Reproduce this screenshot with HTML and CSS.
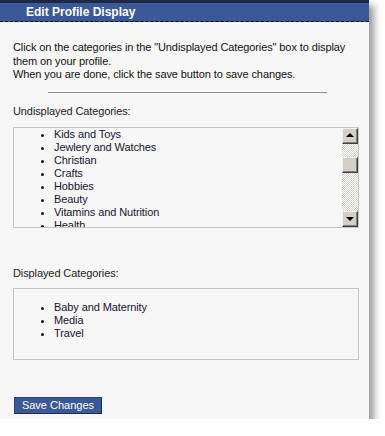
FILE: index.html
```html
<!DOCTYPE html>
<html>
<head>
<meta charset="utf-8">
<link rel="stylesheet" href="styles.css">
</head>
<body>
<div class="panel">
  <div class="topstrip"></div>
  <div class="header">Edit Profile Display</div>
  <div class="content">
    <p class="intro">Click on the categories in the "Undisplayed Categories" box to display them on your profile.<br>When you are done, click the save button to save changes.</p>
    <div class="rule"></div>
    <div class="label">Undisplayed Categories:</div>
    <div class="box scrollbox">
      <ul class="list">
        <li>Kids and Toys</li>
        <li>Jewlery and Watches</li>
        <li>Christian</li>
        <li>Crafts</li>
        <li>Hobbies</li>
        <li>Beauty</li>
        <li>Vitamins and Nutrition</li>
        <li>Health</li>
      </ul>
      <div class="scrollbar">
        <div class="sbtn"><span class="arrow up"></span></div>
        <div class="track">
          <div class="thumb"></div>
        </div>
        <div class="sbtn"><span class="arrow down"></span></div>
      </div>
    </div>
    <div class="label label2">Displayed Categories:</div>
    <div class="box displayed">
      <ul class="list">
        <li>Baby and Maternity</li>
        <li>Media</li>
        <li>Travel</li>
      </ul>
    </div>
    <button class="save">Save Changes</button>
  </div>
</div>
</body>
</html>
```
FILE: styles.css
```css
html, body {
  margin: 0;
  padding: 0;
  background: #ffffff;
}
body {
  font-family: "Liberation Sans", Arial, sans-serif;
  font-size: 11px;
  color: #111;
  letter-spacing: -0.1px;
}
.panel {
  width: 369px;
  height: 419px;
  background: #f7f7f7;
  box-shadow: 5px 5px 7px rgba(0,0,0,0.4);
  display: flex;
  flex-direction: column;
}
.topstrip {
  height: 3px;
  background: #1e2844;
}
.header {
  background: #3b5998;
  color: #fff;
  font-weight: bold;
  font-size: 12px;
  line-height: 18px;
  padding-left: 26px;
  border-bottom: 1px dashed #000;
  box-sizing: border-box;
  height: 19px;
  letter-spacing: 0;
}
.content {
  padding: 19px 10px 0 13px;
  display: flex;
  flex-direction: column;
}
.intro {
  margin: 0;
  line-height: 13.5px;
}
.rule {
  width: 279px;
  height: 1px;
  background: #8c8c8c;
  margin: 10px 0 0 35px;
}
.label {
  margin-top: 12px;
  line-height: 13px;
  color: #222;
}
.box {
  margin-top: 9px;
  width: 346px;
  box-sizing: border-box;
  border: 1px solid #c6c6c6;
  background: #f7f7f7;
}
.scrollbox {
  height: 101px;
  display: flex;
  overflow: hidden;
}
.list {
  margin: 0;
  padding: 0 0 0 40px;
  color: #15152e;
  line-height: 13px;
  flex: 1;
  list-style: disc;
}
.scrollbar {
  width: 16px;
  display: flex;
  flex-direction: column;
}
.sbtn, .thumb {
  height: 16px;
  box-sizing: border-box;
  background: #d4d0c8;
  border-top: 1px solid #f0f0f0;
  border-left: 1px solid #f0f0f0;
  border-right: 1px solid #404040;
  border-bottom: 1px solid #404040;
  box-shadow: inset -1px -1px 0 #808080;
  display: flex;
  align-items: center;
  justify-content: center;
}
.track {
  flex: 1;
  background-color: #f4f3ef;
  background-image: repeating-conic-gradient(#d4d0c8 0 25%, #ffffff 0 50%);
  background-size: 2px 2px;
  padding-top: 13px;
}
.arrow {
  width: 0;
  height: 0;
  border-left: 4px solid transparent;
  border-right: 4px solid transparent;
}
.arrow.up {
  border-bottom: 4px solid #000;
  margin-top: -1px;
}
.arrow.down {
  border-top: 4px solid #000;
}
.label2 {
  margin-top: 39px;
}
.displayed {
  height: 72px;
  margin-top: 8px;
}
.displayed .list {
  padding-top: 12px;
}
.save {
  align-self: flex-start;
  margin-top: 37px;
  margin-left: 1px;
  width: 88px;
  height: 17px;
  padding: 0;
  background: #3b5998;
  color: #fff;
  font-family: "Liberation Sans", Arial, sans-serif;
  font-size: 11px;
  border: 1px solid #29447e;
  border-right-color: #1a2c55;
  border-bottom-color: #1a2c55;
  text-align: center;
  line-height: 15px;
}
```
